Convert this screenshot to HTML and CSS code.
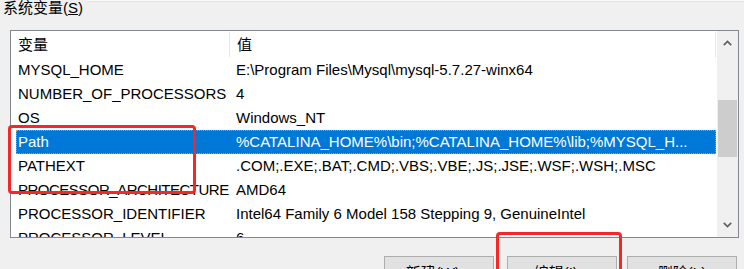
FILE: index.html
```html
<!DOCTYPE html>
<html lang="zh-CN">
<head>
    <meta charset="UTF-8">
    <title>系统变量</title>
    <link rel="stylesheet" href="styles.css">
</head>
<body>
    <div class="dialog">
        <div class="group-title">
            <span class="group-label">系统变量(<u>S</u>)</span>
            <span class="group-line"></span>
        </div>

        <div class="var-list">
            <div class="var-table">
                <div class="list-header">
                    <div class="col-name">变量</div>
                    <div class="col-value">值</div>
                </div>
                <div class="list-row">
                    <div class="col-name">MYSQL_HOME</div>
                    <div class="col-value">E:\Program Files\Mysql\mysql-5.7.27-winx64</div>
                </div>
                <div class="list-row">
                    <div class="col-name">NUMBER_OF_PROCESSORS</div>
                    <div class="col-value">4</div>
                </div>
                <div class="list-row">
                    <div class="col-name">OS</div>
                    <div class="col-value">Windows_NT</div>
                </div>
                <div class="list-row selected">
                    <div class="col-name">Path</div>
                    <div class="col-value">%CATALINA_HOME%\bin;%CATALINA_HOME%\lib;%MYSQL_H...</div>
                </div>
                <div class="list-row">
                    <div class="col-name">PATHEXT</div>
                    <div class="col-value">.COM;.EXE;.BAT;.CMD;.VBS;.VBE;.JS;.JSE;.WSF;.WSH;.MSC</div>
                </div>
                <div class="list-row">
                    <div class="col-name tight">PROCESSOR_ARCHITECTURE</div>
                    <div class="col-value">AMD64</div>
                </div>
                <div class="list-row">
                    <div class="col-name">PROCESSOR_IDENTIFIER</div>
                    <div class="col-value">Intel64 Family 6 Model 158 Stepping 9, GenuineIntel</div>
                </div>
                <div class="list-row">
                    <div class="col-name">PROCESSOR_LEVEL</div>
                    <div class="col-value">6</div>
                </div>
            </div>
            <div class="scrollbar">
                <div class="sb-btn">
                    <svg width="9" height="6" viewBox="0 0 9 6"><polyline points="0.8,5.2 4.5,1.5 8.2,5.2" fill="none" stroke="#606060" stroke-width="1.7"/></svg>
                </div>
                <div class="sb-track"><div class="sb-thumb"></div></div>
                <div class="sb-btn">
                    <svg width="9" height="6" viewBox="0 0 9 6"><polyline points="0.8,0.8 4.5,4.5 8.2,0.8" fill="none" stroke="#606060" stroke-width="1.7"/></svg>
                </div>
            </div>
        </div>

        <div class="button-row">
            <div class="btn btn-new">新建(<u>W</u>)...</div>
            <div class="btn btn-edit">编辑(<u>I</u>)...</div>
            <div class="btn btn-delete">删除(<u>L</u>)</div>
        </div>

        <div class="mark mark-path"></div>
        <div class="mark mark-edit"></div>
    </div>
</body>
</html>
```

FILE: styles.css
```css
body {
    margin: 0;
    padding: 0;
    background-color: #f0f0f0;
    font-family: "Liberation Sans", "Noto Sans CJK SC", sans-serif;
    font-size: 15px;
    color: #000;
}

.dialog {
    position: relative;
    width: 744px;
    height: 269px;
    overflow: hidden;
}

.group-title {
    display: flex;
    height: 30px;
}

.group-label {
    padding-left: 3px;
    line-height: 16px;
    white-space: nowrap;
}

.group-line {
    flex: 1;
    height: 1px;
    margin-left: 4px;
    background-color: #fbfbfb;
    border-bottom: 1px solid #e3e3e3;
}

.var-list {
    display: flex;
    width: 727px;
    height: 206px;
    margin-left: 10px;
    border: 1px solid #828790;
    background-color: #fff;
}

.var-table {
    flex: 1;
    overflow: hidden;
}

.list-header,
.list-row {
    display: flex;
    width: 700px;
    margin-left: 5px;
    white-space: nowrap;
}

.list-header {
    height: 27px;
}

.list-header .col-name,
.list-header .col-value {
    border-right: 1px solid #e5e5e5;
    margin: 1px 0;
    line-height: 25px;
}

.list-row {
    height: 24px;
    line-height: 24px;
}

.col-name {
    width: 211px;
    padding-left: 2px;
    overflow: hidden;
    flex-shrink: 0;
}

.col-name.tight {
    overflow: visible;
    letter-spacing: -0.5px;
}

.col-value {
    flex: 1;
    padding-left: 7px;
    overflow: hidden;
}

.list-row.selected {
    background-color: #0078d7;
    color: #fff;
    outline: 1px dotted #d8904a;
    outline-offset: -1px;
}

.scrollbar {
    display: flex;
    flex-direction: column;
    width: 21px;
    background-color: #f0f0f0;
}

.sb-btn {
    height: 24px;
    display: flex;
    justify-content: center;
    align-items: center;
}

.sb-track {
    flex: 1;
}

.sb-thumb {
    height: 57px;
    margin: 45px 1px 0 1px;
    background-color: #cdcdcd;
}

.button-row {
    display: flex;
    margin-top: 18px;
    padding-left: 384px;
}

.btn {
    width: 108px;
    height: 26px;
    line-height: 31px;
    flex-shrink: 0;
    text-align: center;
    background-color: #e1e1e1;
    border: 1px solid #adadad;
    white-space: nowrap;
}

.btn-edit { margin-left: 13px; }
.btn-delete { margin-left: 10px; }

.mark {
    position: absolute;
    border: 3px solid #f52727;
    border-radius: 4px;
}

.mark-path {
    left: 8px;
    top: 125px;
    width: 182px;
    height: 63px;
}

.mark-edit {
    left: 496px;
    top: 232px;
    width: 120px;
    height: 60px;
}
```
